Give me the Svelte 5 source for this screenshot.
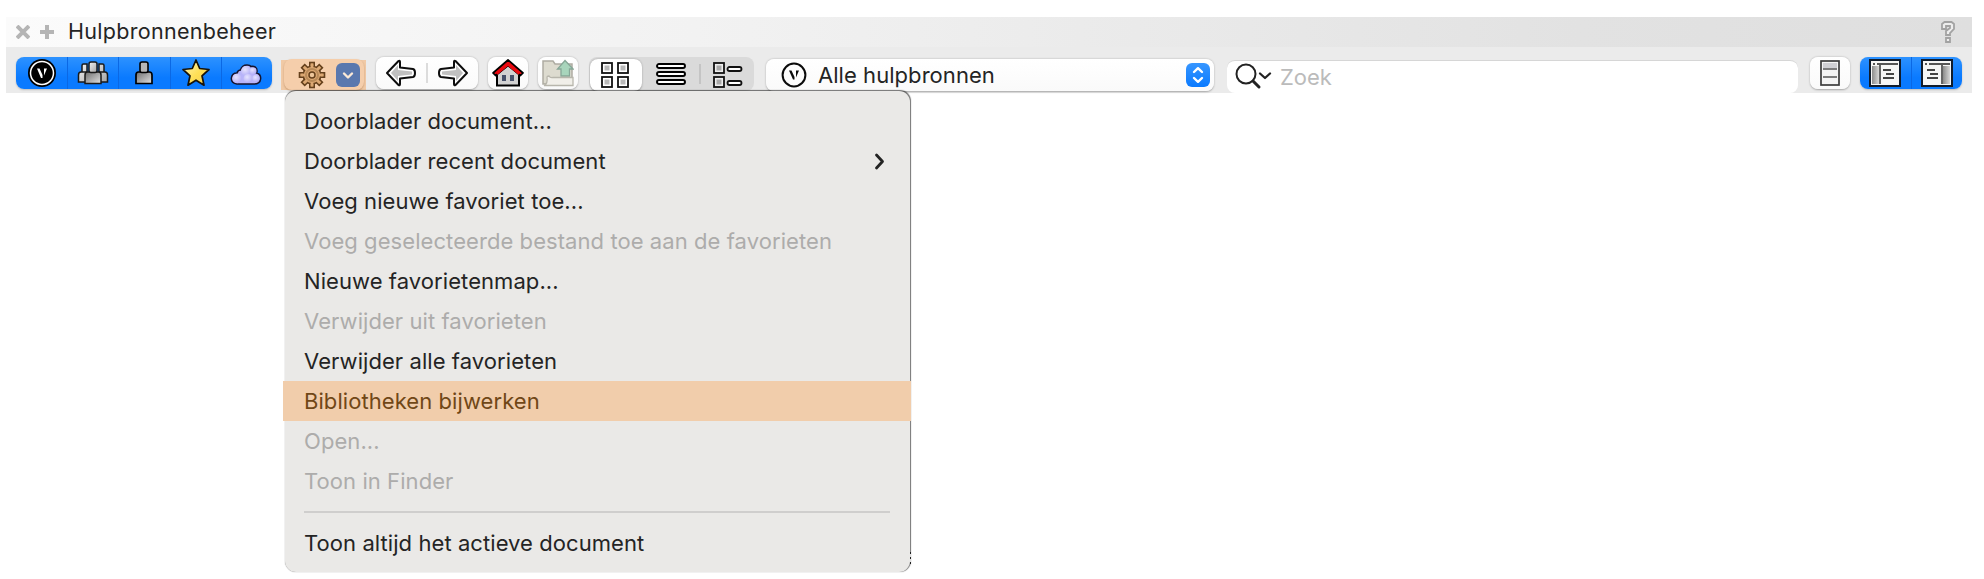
<script>
  let query = "";

  const items = [
    { label: "Doorblader document..." },
    { label: "Doorblader recent document", submenu: true },
    { label: "Voeg nieuwe favoriet toe..." },
    { label: "Voeg geselecteerde bestand toe aan de favorieten", disabled: true },
    { label: "Nieuwe favorietenmap..." },
    { label: "Verwijder uit favorieten", disabled: true },
    { label: "Verwijder alle favorieten" },
    { label: "Bibliotheken bijwerken", active: true },
    { label: "Open...", disabled: true },
    { label: "Toon in Finder", disabled: true },
    { separator: true },
    { label: "Toon altijd het actieve document" },
  ];

  // 8 teeth around the gear
  const teeth = [0, 45, 90, 135, 180, 225, 270, 315];
</script>

<svg class="defs" width="0" height="0" aria-hidden="true">
  <defs>
    <linearGradient id="steel" x1="0" y1="0" x2="1" y2="0">
      <stop offset="0" stop-color="#8c8c8c" />
      <stop offset="1" stop-color="#d6d6d6" />
    </linearGradient>
    <linearGradient id="gold" x1="0" y1="0" x2="1" y2="1">
      <stop offset="0" stop-color="#fff7bd" />
      <stop offset="0.55" stop-color="#ffdf55" />
      <stop offset="1" stop-color="#f3cf58" />
    </linearGradient>
    <linearGradient id="shade" x1="0" y1="0" x2="1" y2="1">
      <stop offset="0" stop-color="#6e6e6e" />
      <stop offset="1" stop-color="#e2e2e2" />
    </linearGradient>
    <linearGradient id="silver" x1="0" y1="0" x2="1" y2="1">
      <stop offset="0" stop-color="#f2f2f2" />
      <stop offset="1" stop-color="#a6a6a6" />
    </linearGradient>
    <radialGradient id="puff" cx="0.4" cy="0.35" r="0.7">
      <stop offset="0" stop-color="#e6e4ff" />
      <stop offset="1" stop-color="#b0abf6" />
    </radialGradient>
  </defs>
</svg>

<main>
  <header>
    <svg width="14" height="14" viewBox="0 0 14 14">
      <path d="M1 1 13 13M13 1 1 13" stroke="#b5b5b5" stroke-width="4" />
    </svg>
    <svg class="plus" width="14" height="14" viewBox="0 0 14 14">
      <path d="M7 0V14M0 7H14" stroke="#b5b5b5" stroke-width="4" />
    </svg>
    <h1>Hulpbronnenbeheer</h1>
    <svg class="help" width="16" height="24" viewBox="0 0 16 24">
      <path
        d="M2 9V4L4.500 2H11.500L14 4V9L10 13V15H6V11L10 8V6H6V9ZM6 18H10V22H6Z"
        fill="#ededed"
        stroke="#a2a2a2"
        stroke-width="1.800"
      />
    </svg>
  </header>

  <div class="toolbar">
    <div class="blue sources">
      <button aria-label="Vectorworks">
        <svg width="30" height="30" viewBox="0 0 30 30">
          <circle cx="15" cy="15" r="14" fill="#000" />
          <circle cx="15" cy="15" r="11.500" fill="none" stroke="#fff" stroke-width="1.500" />
          <path d="M10 10.500H12.500L15.500 17V20H14ZM17 10.500H20L17 17.500Z" fill="#fff" />
        </svg>
      </button>
      <button aria-label="Werkgroep">
        <svg width="32" height="24" viewBox="0 0 32 24">
          <g fill="url(#silver)" stroke="#1a1a1a" stroke-width="1.500">
            <path d="M5 4.500Q5 3 6.500 3H10V11H5ZM1.500 21V14Q1.500 11 4 11H9V21ZM27 4.500Q27 3 25.500 3H22V11H27ZM30.500 21V14Q30.500 11 28 11H23V21Z" />
            <path d="M8 22.500V14Q8 11 10.500 11H21.500Q24 11 24 14V22.500Z" fill="url(#shade)" />
            <rect x="12" y="1" width="8" height="10.500" rx="2" />
          </g>
        </svg>
      </button>
      <button aria-label="Gebruiker">
        <svg width="32" height="24" viewBox="0 0 32 24">
          <path d="M8 22.500V14Q8 11 10.500 11H21.500Q24 11 24 14V22.500Z" fill="url(#shade)" stroke="#000" stroke-width="1.700" />
          <rect x="12" y="1" width="8" height="10.500" rx="2" fill="#b6b6b6" stroke="#000" stroke-width="1.600" />
        </svg>
      </button>
      <button aria-label="Favorieten">
        <svg width="30" height="30" viewBox="0 0 30 30">
          <path d="M15 2 18.700 10.500 28 11.500 21 17.800 23 27.200 15 22.200 7 27.200 9 17.800 2 11.500 11.300 10.500Z" fill="url(#gold)" stroke="#17130a" stroke-width="1.700" stroke-linejoin="round" />
        </svg>
      </button>
      <button aria-label="Cloud">
        <svg class="cloud" width="32" height="24" viewBox="0 0 32 24">
          <path d="M7 21Q1 20 1.500 15Q2 10 7 10Q8 7 10.500 7Q12 2 17 2Q20 2 21 3.500Q27 3 27 8Q27 9 26.500 10Q31 11 30.500 16Q30 21 24 21Z" fill="#b8b4fa" stroke="#16152f" stroke-width="1.700" />
          <g fill="url(#puff)">
            <circle cx="7" cy="15.500" r="4.700" />
            <circle cx="16" cy="8" r="5" />
            <circle cx="23" cy="8" r="3.500" />
            <circle cx="18" cy="15.500" r="4.500" />
            <circle cx="26" cy="15.500" r="3.700" />
          </g>
        </svg>
      </button>
    </div>

    <div class="action">
      <button class="gear" aria-label="Acties">
        <svg width="28" height="28" viewBox="0 0 28 28">
          <g fill="#dca873" stroke="#65401c" stroke-width="1.600">
            {#each teeth as angle}
              <rect x="11.800" y="1.500" width="4.400" height="7" transform="rotate({angle} 14 14)" />
            {/each}
            <circle cx="14" cy="14" r="8.800" />
          </g>
          <g fill="#dca873">
            {#each teeth as angle}
              <rect x="12.600" y="3.500" width="2.800" height="5" transform="rotate({angle} 14 14)" />
            {/each}
          </g>
          <circle cx="14" cy="14" r="6" fill="none" stroke="#b98a58" stroke-width="2" />
          <circle cx="14" cy="14" r="3" fill="#edc69b" stroke="#65401c" stroke-width="1.500" />
        </svg>
        <span class="arrow">
          <svg width="24" height="24" viewBox="0 0 24 24">
            <path d="M8 10.500 12 14.500 16 10.500" fill="none" stroke="#fbe9d7" stroke-width="2.400" stroke-linecap="round" stroke-linejoin="round" />
          </svg>
        </span>
      </button>

      <ul class="menu">
        {#each items as item}
          {#if item.separator}
            <li class="separator"></li>
          {:else}
            <li class:disabled={item.disabled} class:active={item.active}>
              {item.label}
              {#if item.submenu}
                <svg width="12" height="18" viewBox="0 0 12 18">
                  <path d="M2.500 3 8.500 9.500 2.500 16" fill="none" stroke="#232323" stroke-width="2.800" stroke-linecap="round" stroke-linejoin="round" />
                </svg>
              {/if}
            </li>
          {/if}
        {/each}
      </ul>
    </div>

    <div class="white nav">
      <button aria-label="Vorige">
        <svg width="32" height="28" viewBox="0 0 32 28">
          <path d="M2 14 13.500 2Q15 1 15 3V8.500L28 10Q30 10.500 30 14Q30 17.500 28 18L15 19.500V25Q15 27 13.500 26Z" fill="#fff" stroke="#0d0d0d" stroke-width="2" stroke-linejoin="round" />
          <path d="M6 14 13 6V11L27 12.500V15.500L13 17V22Z" fill="#c0c0c0" />
        </svg>
      </button>
      <i></i>
      <button aria-label="Volgende">
        <svg class="flip" width="32" height="28" viewBox="0 0 32 28">
          <path d="M2 14 13.500 2Q15 1 15 3V8.500L28 10Q30 10.500 30 14Q30 17.500 28 18L15 19.500V25Q15 27 13.500 26Z" fill="#fff" stroke="#0d0d0d" stroke-width="2" stroke-linejoin="round" />
          <path d="M6 14 13 6V11L27 12.500V15.500L13 17V22Z" fill="#c0c0c0" />
        </svg>
      </button>
    </div>

    <button class="white home" aria-label="Start">
      <svg width="32" height="28" viewBox="0 0 32 28">
        <path d="M5 15V26.500H27V15L16 6Z" fill="#d2d2d2" stroke="#000" stroke-width="2" />
        <path d="M1 14 16 1 31 14 28.500 16.500 16 6.500 3.500 16.500Z" fill="#e9080f" stroke="#000" stroke-width="1.700" stroke-linejoin="round" />
        <path d="M4.500 14.500 16 5.200 27.500 14.500" fill="none" stroke="#e9080f" stroke-width="3" />
        <path d="M10 16H14V22H10ZM18 16H22V22H18Z" fill="#46506a" />
      </svg>
    </button>

    <button class="white folder" aria-label="Map omhoog">
      <svg width="32" height="28" viewBox="0 0 32 28">
        <path d="M1 25V2H11L13 5H30V24Z" fill="#dddbcf" stroke="#aeaca2" stroke-width="1.500" />
        <path d="M23 1.500 31 10H27.500V17H19V10H15.500Z" fill="#a8d5bc" stroke="#86a797" stroke-width="1.300" />
        <path d="M2 26.500Q6 25 5 18Q5 17 7 17Q8 19 11 18.500H31V26.500Z" fill="#f1efe9" stroke="#b8b6ac" stroke-width="1.300" />
      </svg>
    </button>

    <div class="views">
      <button class="selected" aria-label="Miniaturen">
        <svg width="28" height="26" viewBox="0 0 28 26">
          <g fill="#fff" stroke="#111" stroke-width="1.800">
            <rect x="1" y="1" width="10" height="10" />
            <rect x="17" y="1" width="10" height="10" />
            <rect x="1" y="15" width="10" height="10" />
            <rect x="17" y="15" width="10" height="10" />
          </g>
          <path d="M3.500 3.500H8.500V8.500H3.500ZM19.500 3.500H24.500V8.500H19.500ZM3.500 17.500H8.500V22.500H3.500ZM19.500 17.500H24.500V22.500H19.500Z" fill="#b9b9b9" />
        </svg>
      </button>
      <button aria-label="Lijst">
        <svg width="30" height="22" viewBox="0 0 30 22">
          <g fill="#fff" stroke="#000" stroke-width="1.900">
            <rect x="1" y="1" width="28" height="4" rx="2" />
            <rect x="1" y="9" width="28" height="4" rx="2" />
            <rect x="1" y="17" width="28" height="4" rx="2" />
          </g>
        </svg>
      </button>
      <i></i>
      <button class="details" aria-label="Details">
        <svg width="30" height="26" viewBox="0 0 30 26">
          <g fill="#eee" stroke="#111" stroke-width="1.800">
            <rect x="1" y="1" width="10" height="10" />
            <rect x="1" y="15" width="10" height="10" />
            <rect x="14.500" y="5" width="14" height="4" rx="2" fill="#fff" />
            <rect x="14.500" y="19" width="14" height="4" rx="2" fill="#fff" />
          </g>
          <path d="M3.500 3.500H8.500V8.500H3.500ZM3.500 17.500H8.500V22.500H3.500Z" fill="#a9a9a9" />
        </svg>
      </button>
    </div>

    <div class="white select">
      <svg width="26" height="26" viewBox="0 0 26 26">
        <circle cx="13" cy="13" r="11.400" fill="none" stroke="#0b0b0b" stroke-width="2" />
        <path d="M8 8.500H10.500L13.500 15V17.500H12ZM15 8.500H18L15 15.500Z" fill="#0b0b0b" />
      </svg>
      <span class="value">Alle hulpbronnen</span>
      <span class="stepper">
        <svg width="24" height="24" viewBox="0 0 24 24">
          <path d="M8 9 12 5.200 16 9M8 15 12 18.800 16 15" fill="none" stroke="#fff" stroke-width="2.400" stroke-linecap="round" stroke-linejoin="round" />
        </svg>
      </span>
    </div>

    <label class="search">
      <svg width="38" height="28" viewBox="0 0 38 28">
        <g fill="none" stroke="#222" stroke-linecap="round">
          <circle cx="11" cy="11" r="9.500" stroke-width="2" />
          <path d="M18 18 24 24" stroke-width="3" />
          <path d="M25 10.500 30 15 35 10.500" stroke-width="2.300" stroke-linejoin="round" />
        </g>
      </svg>
      <input bind:value={query} placeholder="Zoek" />
    </label>

    <button class="white page" aria-label="Voorvertoning">
      <svg width="20" height="26" viewBox="0 0 20 26">
        <rect x="1" y="1" width="18" height="24" fill="#f3f3f3" stroke="#3b3b3b" stroke-width="1.700" />
        <path d="M3 3H17V8H3Z" fill="#cfcfd3" />
        <path d="M3 9H17M3 17H17" stroke="#555" stroke-width="1.300" />
      </svg>
    </button>

    <div class="blue panels">
      <button aria-label="Linkerpaneel">
        <svg width="32" height="28" viewBox="0 0 32 28">
          <rect x="1" y="1" width="30" height="26" fill="#f6f6f6" stroke="#111c2b" stroke-width="2" />
          <path d="M3 7H10V25H3Z" fill="url(#steel)" />
          <path d="M4 5H6M8 5H29M11 6V25" stroke="#555" stroke-width="1.800" />
          <path d="M14 11H22M17 15H25M14 19H20M17 19H25" stroke="#444" stroke-width="2" />
        </svg>
      </button>
      <button aria-label="Rechterpaneel">
        <svg width="32" height="28" viewBox="0 0 32 28">
          <rect x="1" y="1" width="30" height="26" fill="#f6f6f6" stroke="#111c2b" stroke-width="2" />
          <path d="M22 7H29V25H22Z" fill="url(#steel)" />
          <path d="M4 5H6M8 5H29M21 6V25" stroke="#555" stroke-width="1.800" />
          <path d="M6 11H14M9 15H17M6 19H17" stroke="#444" stroke-width="2" />
        </svg>
      </button>
    </div>
  </div>
</main>

<style>
  :global(body) {
    background: #fff;
  }

  main {
    box-sizing: border-box;
    width: 1972px;
    height: 579px;
    padding: 17px 0 0 6px;
    font-family: Inter, "Liberation Sans", sans-serif;
    font-size: 22px;
    color: #242424;
  }

  .defs {
    position: absolute;
  }

  svg {
    display: block;
    flex: none;
  }

  header {
    display: flex;
    align-items: center;
    height: 30px;
    padding: 0 16px 0 10px;
    background: linear-gradient(90deg, #fbfbfb, #f2f2f2 35%, #e2e2e2 80%, #dfdfdf);
  }

  .plus {
    margin-left: 10px;
  }

  h1 {
    margin: 0 auto 0 14px;
    font-size: 21.5px;
    font-weight: 400;
    line-height: 28px;
    letter-spacing: 0.3px;
    padding-bottom: 2px;
  }

  .toolbar {
    display: flex;
    align-items: flex-start;
    box-sizing: border-box;
    height: 46px;
    padding: 10px 10px 0;
    background: #ebebeb;
  }

  button {
    display: flex;
    align-items: center;
    justify-content: center;
    padding: 0;
    border: 0;
    background: none;
  }

  .blue {
    display: flex;
    height: 32px;
    border-radius: 8px;
    background: linear-gradient(#2d92ff, #0a7aff 65%, #0a7aff);
    box-shadow: 0 1px 2px rgba(0, 0, 0, 0.2);
  }

  .blue button {
    box-sizing: border-box;
    flex: 1;
  }

  .blue button + button {
    border-left: 1.5px solid #0b68e4;
  }

  .sources {
    width: 256px;
  }

  .sources button:first-child {
    flex: none;
    width: 51px;
  }

  .cloud {
    margin: 4px 0 0 -2px;
  }

  .action {
    position: relative;
    margin: 3px 0 0 9px;
    width: 85px;
    height: 30px;
    background: #f1caa6;
  }

  .gear {
    box-sizing: border-box;
    width: 80px;
    height: 31px;
    margin: -1px 0 0 3px;
    padding: 1px 4px 0 14px;
    justify-content: space-between;
    border-radius: 8px;
    background: #f5ceab;
    box-shadow: 0 1px 2px rgba(120, 70, 20, 0.35);
  }

  .arrow {
    border-radius: 6px;
    background: #5a78ae;
  }

  .menu {
    position: absolute;
    z-index: 1;
    top: 31px;
    left: 4px;
    box-sizing: border-box;
    width: 625px;
    height: 481px;
    margin: 0;
    padding: 10px 0 0;
    list-style: none;
    letter-spacing: 0.07px;
    border-radius: 11px;
    background: #eae9e7;
    box-shadow: 0.5px -0.5px 1px rgba(0, 0, 0, 0.55);
  }

  .menu li {
    display: flex;
    align-items: center;
    justify-content: space-between;
    height: 40px;
    padding: 0 24px 0 19px;
    white-space: nowrap;
  }

  .menu .disabled {
    color: #adacab;
  }

  .menu .active {
    margin: 0 -1px 0 -2px;
    padding-left: 21px;
    background: #f1cdab;
    color: #704717;
  }

  .menu .separator {
    height: 2px;
    margin: 10px 20px 10px 19px;
    padding: 0;
    background: #cfcecd;
  }

  /* resize grip peeking out behind the menu */
  .menu::after {
    content: "";
    position: absolute;
    right: -1px;
    bottom: 8px;
    width: 1px;
    height: 12px;
    background: repeating-linear-gradient(#222 0 2px, #ddd 2px 5px);
  }

  .white {
    border-radius: 8px;
    background: linear-gradient(#fff, #fafafa);
    box-shadow: 0 0.5px 2px rgba(0, 0, 0, 0.3);
  }

  .nav {
    display: flex;
    align-items: center;
    width: 102px;
    height: 32px;
    margin-left: 10px;
  }

  .nav button {
    flex: 1;
  }

  i {
    width: 2px;
    height: 20px;
    background: #dcdcdc;
  }

  .flip {
    transform: scaleX(-1);
  }

  .home,
  .folder {
    width: 40px;
    height: 32px;
    margin-left: 10px;
  }

  .views {
    display: flex;
    align-items: center;
    width: 165px;
    height: 34px;
    margin-left: 11px;
    border-radius: 8px;
    background: #dadada;
  }

  .views i {
    background: #c4c4c4;
  }

  .views button {
    width: 57px;
    height: 32px;
  }

  .views .selected {
    width: 52px;
    margin: 2px 0 0 1px;
    padding: 0 2px 0 0;
    box-sizing: border-box;
    border-radius: 8px;
    background: #fff;
    box-shadow: 0 0.5px 2px rgba(0, 0, 0, 0.3);
  }

  .views .details {
    width: 53px;
    padding-top: 2px;
  }

  .select {
    display: flex;
    align-items: center;
    box-sizing: border-box;
    width: 448px;
    height: 32px;
    margin: 2px 0 0 12px;
    padding: 0 4px 0 15px;
  }

  .value {
    margin: 0 auto 0 11px;
    letter-spacing: 0.05px;
  }

  .stepper {
    border-radius: 6px;
    background: linear-gradient(#3796ff, #0a7aff);
  }

  .search {
    display: flex;
    align-items: center;
    box-sizing: border-box;
    width: 571px;
    height: 33px;
    margin: 3px 0 0 13px;
    padding-left: 8px;
    border-top: 1px solid #d6d6d6;
    border-radius: 8px;
    background: #fff;
  }

  .search input {
    flex: 1;
    padding: 0 0 0 7px;
    border: 0;
    outline: 0;
    background: none;
    font: inherit;
  }

  .search input::placeholder {
    color: #bbb;
  }

  .page {
    width: 40px;
    height: 32px;
    margin-left: 12px;
  }

  .panels {
    width: 102px;
    margin-left: 10px;
  }
</style>
